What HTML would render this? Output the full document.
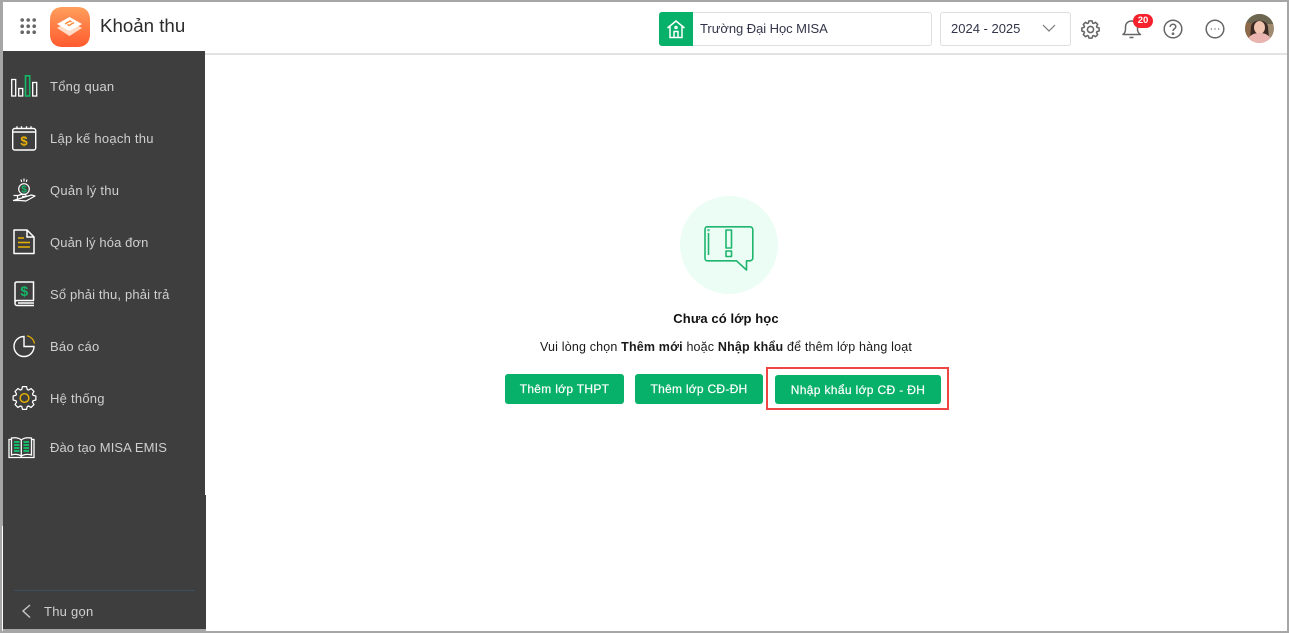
<!DOCTYPE html>
<html lang="vi"><head><meta charset="utf-8"><title>Khoản thu</title>
<style>
*{box-sizing:border-box}
html,body{margin:0;padding:0;width:1289px;height:633px;overflow:hidden;background:#fff;font-family:"Liberation Sans","Noto Sans CJK SC",sans-serif}
.a{position:absolute}
.t{position:absolute;white-space:nowrap;line-height:20px}
.m{position:absolute;left:50px;color:#cfcfcf;font-size:13px;line-height:20px;white-space:nowrap;letter-spacing:.25px}
.b{position:absolute;background:#08b16a;color:#fff;border-radius:3px;font-size:12px;text-align:center;line-height:31px;letter-spacing:.3px;-webkit-text-stroke:.2px #fff}
svg{position:absolute;overflow:visible}
</style></head><body>
<div class="a" style="left:0;top:0;width:1289px;height:2px;background:#a6a6a6"></div>
<div class="a" style="left:0;top:0;width:3px;height:526px;background:#a6a6a6"></div>
<div class="a" style="left:0;top:526px;width:2px;height:107px;background:#a6a6a6"></div>
<div class="a" style="left:1287px;top:0;width:2px;height:633px;background:#a6a6a6"></div>
<div class="a" style="left:0;top:631px;width:1289px;height:2px;background:#a6a6a6"></div>
<div class="a" style="left:3px;top:629px;width:203px;height:4px;background:#a6a6a6"></div>
<div class="a" style="left:205px;top:53px;width:1082px;height:2px;background:#e2e2e2"></div>
<div class="a" style="left:3px;top:51px;width:202px;height:444px;background:#3e3e3e"></div>
<div class="a" style="left:3px;top:495px;width:203px;height:134px;background:#3e3e3e"></div>

<!-- app grid -->
<svg style="left:20px;top:18px" width="17" height="17" fill="#666"><circle cx="2.200" cy="2" r="1.800"/><circle cx="8.200" cy="2" r="1.800"/><circle cx="14.200" cy="2" r="1.800"/><circle cx="2.200" cy="8.200" r="1.800"/><circle cx="8.200" cy="8.200" r="1.800"/><circle cx="14.200" cy="8.200" r="1.800"/><circle cx="2.200" cy="14.200" r="1.800"/><circle cx="8.200" cy="14.200" r="1.800"/><circle cx="14.200" cy="14.200" r="1.800"/></svg>
<!-- logo -->
<svg style="left:50px;top:7px" width="40" height="40" viewBox="0 0 40 40"><defs><linearGradient id="g" x1="0" y1="0" x2="0" y2="1"><stop offset="0" stop-color="#ff9f5c"/><stop offset="1" stop-color="#ff5a2e"/></linearGradient></defs><path d="M13 0H27C36 0 40 5 40 13V27C40 35 36 40 27 40H13C4 40 0 35 0 27V13C0 5 4 0 13 0Z" fill="url(#g)"/><path d="M7 21L19.500 14L32 21L19.500 29Z" fill="#ffdcc8"/><path d="M7 17L19.500 10L32 17L19.500 24Z" fill="#fff"/><path d="M15 17L20 14L21.500 15M24 15.500L19 18.500L17.500 17.500" stroke="#ff8a3c" stroke-width="1.400" fill="none"/></svg>
<div class="t" style="left:100px;top:16px;font-size:18.700px;color:#2c2c2c">Khoản thu</div>

<!-- school select -->
<div class="a" style="left:659px;top:12px;width:273px;height:34px;border:1px solid #dedede;border-radius:3px"></div>
<div class="a" style="left:659px;top:12px;width:34px;height:34px;background:#08b16a;border-radius:3px 0 0 3px"></div>
<svg style="left:666px;top:19px" width="20" height="20" viewBox="0 0 20 20" fill="none" stroke="#fff" stroke-width="1.500"><path d="M1.500 9L10 2L18.500 9M4 7.500V18.500H16V7.500"/><path d="M8 18.500V12.500H12V18.500"/><circle cx="10" cy="8.500" r="1"/></svg>
<div class="t" style="left:700px;top:19px;font-size:13px;color:#33364a;letter-spacing:-.05px">Trường Đại Học MISA</div>
<!-- year select -->
<div class="a" style="left:940px;top:12px;width:131px;height:34px;border:1px solid #dedede;border-radius:3px"></div>
<div class="t" style="left:951px;top:19px;font-size:13px;color:#33364a">2024 - 2025</div>
<svg style="left:1042px;top:24px" width="14" height="9" fill="none" stroke="#777" stroke-width="1.200"><path d="M1 1L7 7L13 1"/></svg>

<!-- header icons -->
<svg style="left:1081px;top:20px" width="19" height="19" viewBox="-13 -13 26 26" fill="none" stroke="#666" stroke-width="2.100" stroke-linejoin="round"><path d="M8.840 -2.870L11.820 -2.080L11.820 2.080L8.840 2.870L8.290 4.220L9.830 6.880L6.880 9.830L4.220 8.290L2.870 8.840L2.080 11.820L-2.080 11.820L-2.870 8.840L-4.220 8.290L-6.880 9.830L-9.830 6.880L-8.290 4.220L-8.840 2.870L-11.820 2.080L-11.820 -2.080L-8.840 -2.870L-8.290 -4.220L-9.830 -6.880L-6.880 -9.830L-4.220 -8.290L-2.870 -8.840L-2.080 -11.820L2.080 -11.820L2.870 -8.840L4.220 -8.290L6.880 -9.830L9.830 -6.880L8.290 -4.220Z"/><circle r="4.200"/></svg>
<svg style="left:1122px;top:19px" width="20" height="21" viewBox="0 0 20 21" fill="none" stroke="#666" stroke-width="1.500"><path d="M1 15.500C3 14 3.500 12.500 3.500 10V8C3.500 4.500 6 2 9.500 2C13 2 15.500 4.500 15.500 8V10C15.500 12.500 16 14 18.500 15.500Z" stroke-linejoin="round"/><path d="M7.500 18.500H11.500"/></svg>
<div class="a" style="left:1133px;top:14px;width:20px;height:14px;border-radius:7px;background:#f5222d;color:#fff;font-size:9.500px;font-weight:bold;line-height:14px;text-align:center">20</div>
<svg style="left:1163px;top:19px" width="20" height="20" viewBox="0 0 20 20" fill="none" stroke="#666" stroke-width="1.500"><circle cx="10" cy="10" r="8.800"/><path d="M7.200 8C7.200 6.200 8.500 5.300 10 5.300C11.600 5.300 12.800 6.300 12.800 7.800C12.800 9.800 10 9.800 10 12"/><circle cx="10" cy="14.700" r=".6"/></svg>
<svg style="left:1205px;top:19px" width="20" height="20" viewBox="0 0 20 20" fill="none" stroke="#666" stroke-width="1.500"><circle cx="10" cy="10" r="8.800"/><path d="M5.800 10H6.800M9.500 10H10.500M13.200 10H14.200"/></svg>
<!-- avatar -->
<svg style="left:1245px;top:14px" width="29" height="29" viewBox="0 0 29 29"><defs><clipPath id="c"><circle cx="14.500" cy="14.500" r="14.500"/></clipPath></defs><g clip-path="url(#c)"><rect width="29" height="29" fill="#a08a70"/><rect width="29" height="10" fill="#6d6650"/><rect x="0" y="9" width="8" height="20" fill="#8d6a4a"/><path d="M6 13C6 5 22 4 23 13L24 24H5Z" fill="#3c2a24"/><ellipse cx="14.500" cy="13.500" rx="5.500" ry="6.500" fill="#f0c4ae"/><path d="M2 29C3 21 9 19 14.500 19C20 19 26 21 27 29Z" fill="#eab4b0"/></g></svg>

<!-- sidebar icons -->
<svg style="left:11px;top:75px" width="27" height="22" fill="none" stroke="#fff" stroke-width="1.300"><rect x=".7" y="4.500" width="4" height="16.500"/><rect x="7.700" y="13.500" width="4" height="7.500"/><rect x="14.500" y=".8" width="4.200" height="20.200" stroke="#14b866" stroke-width="1.600"/><rect x="21.700" y="7.500" width="4" height="13.500"/></svg>
<div class="m" style="top:77px">Tổng quan</div>

<svg style="left:12px;top:126px" width="25" height="25" fill="none" stroke="#fff" stroke-width="1.400"><rect x=".7" y="2.500" width="23" height="21.500" rx="2"/><path d="M.7 6H23.700M5 .3V3M9.500 .3V3M14.500 .3V3M19 .3V3"/><text x="12" y="19.500" font-size="13" font-weight="bold" fill="#e8b100" stroke="none" text-anchor="middle" font-family="Liberation Sans">$</text></svg>
<div class="m" style="top:129px">Lập kế hoạch thu</div>

<svg style="left:13px;top:178px" width="23" height="25" fill="none" stroke="#fff" stroke-width="1.200"><circle cx="11" cy="11" r="5.300"/><path d="M8 1.500L8.700 4M11 .5V3.500M14 1.500L13.300 4"/><text x="11" y="14.500" font-size="10" font-weight="bold" fill="#14b866" stroke="none" text-anchor="middle" font-family="Liberation Sans">$</text><path d="M.5 17.500H5L8 16.500H12.500L13.500 18.500H9M13.500 18.500L18.500 17L22 18L13 23L7 22.500H.5Z" stroke-linejoin="round"/><path d="M4.500 17.500V22.500"/></svg>
<div class="m" style="top:181px">Quản lý thu</div>

<svg style="left:13px;top:229px" width="22" height="26" fill="none" stroke="#fff" stroke-width="1.500"><path d="M1 1H14L21 8V24.500H1Z" stroke-linejoin="round"/><path d="M14 1V8H21"/><path d="M5 9H11M5 13.500H17M5 18H17" stroke="#e8b100" stroke-width="1.500"/></svg>
<div class="m" style="top:233px;letter-spacing:.12px">Quản lý hóa đơn</div>

<svg style="left:14px;top:281px" width="21" height="26" fill="none" stroke="#fff" stroke-width="1.500"><path d="M20 19.500H3C1.500 19.500 1 20.500 1 22C1 23.500 1.800 24.500 3 24.500H20M1 22V2.500C1 1.500 1.800 1 3 1H19.500V19.500M4 22H20"/><text x="10.300" y="15" font-size="14" font-weight="bold" fill="#14b866" stroke="none" text-anchor="middle" font-family="Liberation Sans">$</text></svg>
<div class="m" style="top:285px;letter-spacing:.15px">Sổ phải thu, phải trả</div>

<svg style="left:13px;top:335px" width="22" height="23" fill="none" stroke="#fff" stroke-width="1.400"><path d="M11 1.500A10 10 0 1 0 21 11.500H11Z"/><path d="M14 .8A9.500 9.500 0 0 1 21.500 8.500" stroke="#e8b100" stroke-width="1.200"/></svg>
<div class="m" style="top:337px">Báo cáo</div>

<svg style="left:12px;top:385px" width="25" height="26" viewBox="-13 -13 26 26" fill="none" stroke="#fff" stroke-width="1.300" stroke-linejoin="round"><path d="M8.840 -2.870L11.820 -2.080L11.820 2.080L8.840 2.870L8.290 4.220L9.830 6.880L6.880 9.830L4.220 8.290L2.870 8.840L2.080 11.820L-2.080 11.820L-2.870 8.840L-4.220 8.290L-6.880 9.830L-9.830 6.880L-8.290 4.220L-8.840 2.870L-11.820 2.080L-11.820 -2.080L-8.840 -2.870L-8.290 -4.220L-9.830 -6.880L-6.880 -9.830L-4.220 -8.290L-2.870 -8.840L-2.080 -11.820L2.080 -11.820L2.870 -8.840L4.220 -8.290L6.880 -9.830L9.830 -6.880L8.290 -4.220Z"/><circle r="4.500" stroke="#e8b100" stroke-width="1.500"/></svg>
<div class="m" style="top:389px">Hệ thống</div>

<svg style="left:8px;top:437px" width="27" height="22" fill="none" stroke="#fff" stroke-width="1.300"><path d="M3 2.500H1V20.500H26V2.500H24"/><path d="M13.300 19C10 17 7 17 3.500 18V1C7 .5 10.500 .5 13.300 3C16 .5 20 .5 23.500 1V18C20 17 16.500 17 13.300 19ZM13.300 3V21"/><path d="M6 5H11.500M6 8H11.500M6 11H11.500M6 14H11.500M15.500 5H21M15.500 8H21M15.500 11H21M15.500 14H21" stroke="#14b866" stroke-width="2"/></svg>
<div class="m" style="top:438px;letter-spacing:.08px">Đào tạo MISA EMIS</div>

<div class="a" style="left:14px;top:590px;width:181px;height:1px;background:#3d4f5f"></div>
<svg style="left:21px;top:604px" width="10" height="15" fill="none" stroke="#c8c8c8" stroke-width="1.400"><path d="M9 1L2 7L9 13.500"/></svg>
<div class="m" style="left:44px;top:602px">Thu gọn</div>

<!-- empty state -->
<div class="a" style="left:680px;top:196px;width:98px;height:98px;border-radius:50%;background:#ebfdf4"></div>
<svg style="left:704px;top:226px" width="50" height="46" fill="none" stroke="#1fb56f" stroke-width="1.600" stroke-linejoin="round"><path d="M3 .8H46C47.500 .8 48.800 2 48.800 3.500V32C48.800 33.500 47.500 34.800 46 34.800H42.500V44L32.500 34.800H3C1.800 34.800 1 33.500 1 32V3.500C1 2 1.800 .8 3 .8Z"/><rect x="22" y="4" width="5.500" height="18"/><rect x="22" y="25" width="5.500" height="5.500"/><path d="M4.500 7V29"/><circle cx="4.500" cy="4.200" r=".4"/></svg>
<div class="t" style="left:506px;width:440px;top:309px;text-align:center;font-size:13px;font-weight:bold;color:#111;letter-spacing:.1px">Chưa có lớp học</div>
<div class="t" style="left:476px;width:500px;top:337px;text-align:center;font-size:12.500px;color:#1a1a1a;letter-spacing:.17px">Vui lòng chọn <b>Thêm mới</b> hoặc <b>Nhập khẩu</b> để thêm lớp hàng loạt</div>
<div class="b" style="left:505px;top:374px;width:119px;height:30px">Thêm lớp THPT</div>
<div class="b" style="left:635px;top:374px;width:128px;height:30px;letter-spacing:.27px">Thêm lớp CĐ-ĐH</div>
<div class="b" style="left:775px;top:375px;width:166px;height:29px;line-height:30px;letter-spacing:.35px">Nhập khẩu lớp CĐ - ĐH</div>
<div class="a" style="left:766px;top:367px;width:183px;height:43px;border:2px solid #f04545"></div>
</body></html>
